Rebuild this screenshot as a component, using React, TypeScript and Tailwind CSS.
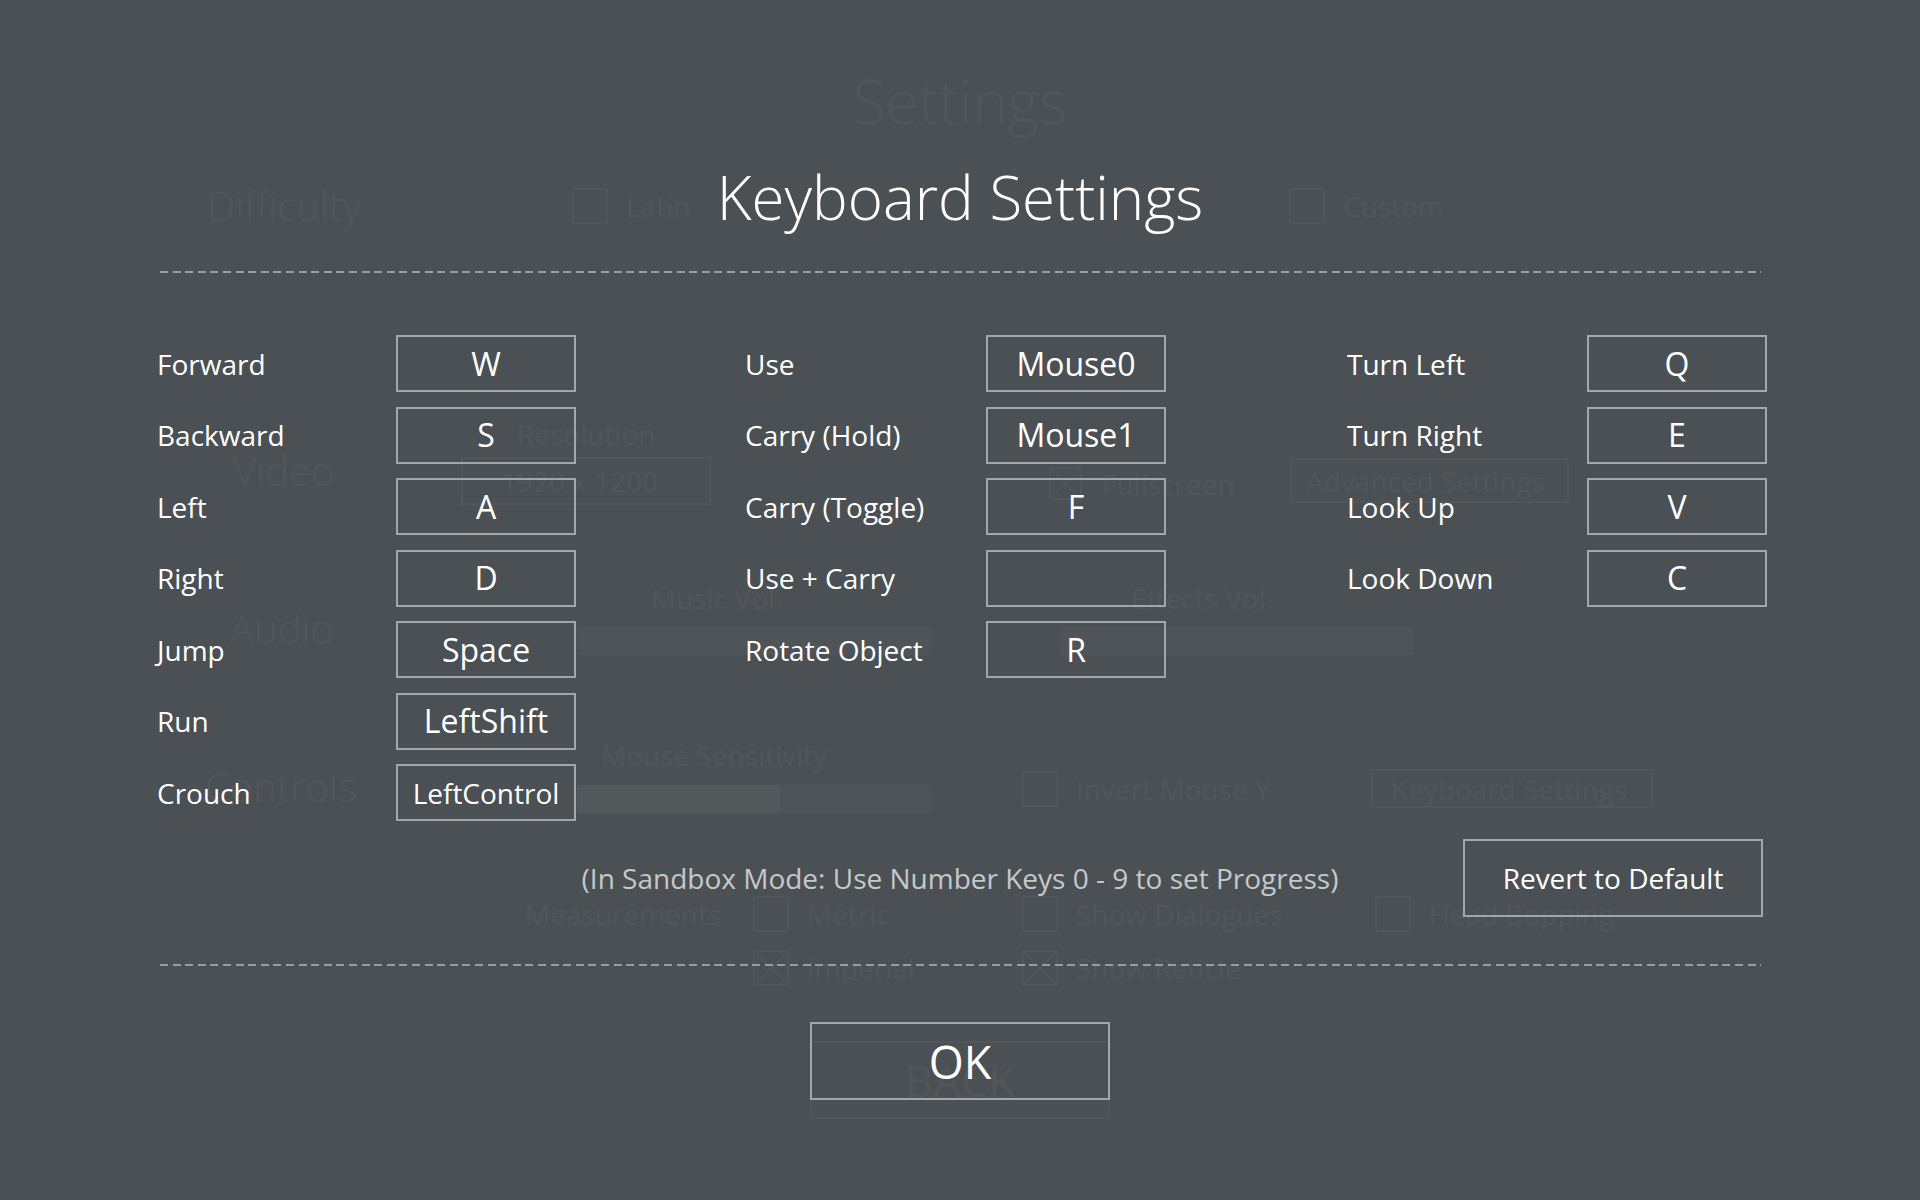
import React from "react";

const col1 = [
  ["Forward", "W"],
  ["Backward", "S"],
  ["Left", "A"],
  ["Right", "D"],
  ["Jump", "Space"],
  ["Run", "LeftShift"],
  ["Crouch", "LeftControl"],
];
const col2 = [
  ["Use", "Mouse0"],
  ["Carry (Hold)", "Mouse1"],
  ["Carry (Toggle)", "F"],
  ["Use + Carry", ""],
  ["Rotate Object", "R"],
];
const col3 = [
  ["Turn Left", "Q"],
  ["Turn Right", "E"],
  ["Look Up", "V"],
  ["Look Down", "C"],
];

function Dash({ className = "" }: { className?: string }) {
  return (
    <div
      className={
        "h-[2px] w-[1601px] shrink-0 bg-[repeating-linear-gradient(90deg,#9a9da0_0px,#9a9da0_8px,transparent_8px,transparent_12.6px)] " +
        className
      }
    />
  );
}

function KeyRow({ label, value, labelW }: { label: string; value: string; labelW: string }) {
  return (
    <div className="flex h-[57px] items-center">
      <div className={labelW + " text-[28px] leading-[28px] text-white"}>{label}</div>
      <div className="flex h-[57px] w-[180px] items-center justify-center border-2 border-[#a4a6a9] text-white">
        <span className={value === "LeftControl" ? "text-[28px] leading-[28px]" : "text-[32px] leading-[32px]"}>
          {value}
        </span>
      </div>
    </div>
  );
}

/* ---------- faint settings page lying under the dialog ---------- */

function GBox({ size = "h-[36px] w-[36px]", x = false }: { size?: string; x?: boolean }) {
  return (
    <div className={"shrink-0 border-2 border-white/[0.04] " + size}>
      {x && (
        <svg className="h-full w-full" viewBox="0 0 10 10" preserveAspectRatio="none">
          <path d="M0 0L10 10M10 0L0 10" stroke="rgba(255,255,255,0.04)" strokeWidth="0.6" />
        </svg>
      )}
    </div>
  );
}

function GCheck({ label, x = false, w }: { label: string; x?: boolean; w: string }) {
  return (
    <div className={"flex items-center gap-[18px] " + w}>
      <GBox x={x} />
      <span className="text-[28px] leading-[28px]">{label}</span>
    </div>
  );
}

function GSlider({ fill }: { fill?: string }) {
  return (
    <div className="h-[28px] w-[354px] bg-white/[0.025]">
      {fill && <div className={"h-full bg-white/[0.025] " + fill} />}
    </div>
  );
}

function Ghost() {
  return (
    <div className="flex h-full w-full flex-col text-white/[0.035]">
      <div className="mt-[71px] h-[60px] text-center text-[60px] font-light leading-[60px]">Settings</div>

      <div className="mt-[55px] flex h-[40px] items-center pl-[207px]">
        <div className="w-[365px] text-[40px] font-light leading-[40px]">Difficulty</div>
        <GCheck label="Latin" w="w-[717px]" />
        <GCheck label="Custom" w="" />
      </div>

      <div className="mt-[194px] flex items-end pl-[233px]">
        <div className="mb-[14px] w-[228px] text-[40px] font-light leading-[40px]">Video</div>
        <div className="flex w-[588px] flex-col">
          <div className="pl-[56px] text-[28px] leading-[28px]">Resolution</div>
          <div className="mt-[9px] flex h-[48px] w-[250px] items-center border-2 border-white/[0.04] pl-[38px] text-[28px] leading-[28px]">
            1920 x 1200
          </div>
        </div>
        <div className="mb-[5px] w-[241px]">
          <div className="flex items-center gap-[20px]">
            <GBox size="h-[33px] w-[33px]" x />
            <span className="text-[28px] leading-[28px]">Fullscreen</span>
          </div>
        </div>
        <div className="mb-[2px] flex h-[45px] w-[279px] items-center border-2 border-white/[0.04] pl-[14px] text-[28px] leading-[28px]">
          Advanced Settings
        </div>
      </div>

      <div className="mt-[79px] flex items-end pl-[230px]">
        <div className="mb-[6px] w-[347px] text-[40px] font-light leading-[40px]">Audio</div>
        <div className="flex w-[483px] flex-col">
          <div className="pl-[74px] text-[28px] leading-[28px]">Music Vol.</div>
          <div className="mt-[15px]">
            <GSlider />
          </div>
        </div>
        <div className="flex flex-col">
          <div className="pl-[71px] text-[28px] leading-[28px]">Effects Vol.</div>
          <div className="mt-[15px]">
            <GSlider />
          </div>
        </div>
      </div>

      <div className="mt-[86px] flex items-end pl-[205px]">
        <div className="mb-[6px] w-[372px] text-[40px] font-light leading-[40px]">Controls</div>
        <div className="flex w-[445px] flex-col">
          <div className="pl-[24px] text-[28px] leading-[28px]">Mouse Sensitivity</div>
          <div className="mt-[16px]">
            <GSlider fill="w-[203px]" />
          </div>
        </div>
        <div className="mb-[6px] w-[349px]">
          <GCheck label="Invert Mouse Y" w="" />
        </div>
        <div className="mb-[5px] flex h-[39px] w-[282px] items-center border-2 border-white/[0.04] pl-[18px] text-[28px] leading-[28px]">
          Keyboard Settings
        </div>
      </div>

      <div className="mt-[83px] flex items-start pl-[525px]">
        <div className="mt-[4px] w-[228px] text-[28px] leading-[28px]">Measurements</div>
        <div className="flex w-[269px] flex-col gap-[18px]">
          <GCheck label="Metric" w="" />
          <GCheck label="Imperial" x w="" />
        </div>
        <div className="flex w-[353px] flex-col gap-[18px]">
          <GCheck label="Show Dialogues" w="" />
          <GCheck label="Show Reticle" x w="" />
        </div>
        <GCheck label="Head Bopping" w="" />
      </div>

      <div className="mt-[55px] flex h-[78px] w-[300px] items-center justify-center self-center border-2 border-white/[0.04] text-[44px] leading-[44px]">
        BACK
      </div>
    </div>
  );
}

export default function App() {
  return (
    <div className="relative h-[1200px] w-[1920px] overflow-hidden bg-[#4b5054] font-['Open_Sans',sans-serif] text-white">
      <Ghost />
      <div className="absolute inset-0 flex flex-col items-center">
        <h1 className="mt-[167px] text-[60px] font-light leading-[60px] text-white">Keyboard Settings</h1>
        <Dash className="mt-[44px]" />
        <div className="mt-[62px] grid grid-cols-[588px_602px_1fr] self-stretch pl-[157px]">
          <div className="flex flex-col gap-[14.5px]">
            {col1.map(([l, v]) => (
              <KeyRow key={l} label={l} value={v} labelW="w-[239px]" />
            ))}
          </div>
          <div className="flex flex-col gap-[14.5px]">
            {col2.map(([l, v]) => (
              <KeyRow key={l} label={l} value={v} labelW="w-[241px]" />
            ))}
          </div>
          <div className="flex flex-col gap-[14.5px]">
            {col3.map(([l, v]) => (
              <KeyRow key={l} label={l} value={v} labelW="w-[240px]" />
            ))}
          </div>
        </div>
        <div className="mt-[18px] grid h-[78px] grid-cols-[1fr_auto_1fr] items-center self-stretch">
          <div />
          <div className="text-[28px] leading-[28px] text-[#c6c8ca]">
            (In Sandbox Mode: Use Number Keys 0 - 9 to set Progress)
          </div>
          <div className="flex justify-end pr-[157px]">
            <div className="flex h-[78px] w-[300px] items-center justify-center border-2 border-[#a4a6a9] text-[28px] leading-[28px] text-white">
              Revert to Default
            </div>
          </div>
        </div>
        <Dash className="mt-[47px]" />
        <div className="mt-[56px] flex h-[78px] w-[300px] items-center justify-center border-2 border-[#a4a6a9] text-[45px] leading-[45px] text-white">
          OK
        </div>
      </div>
    </div>
  );
}
